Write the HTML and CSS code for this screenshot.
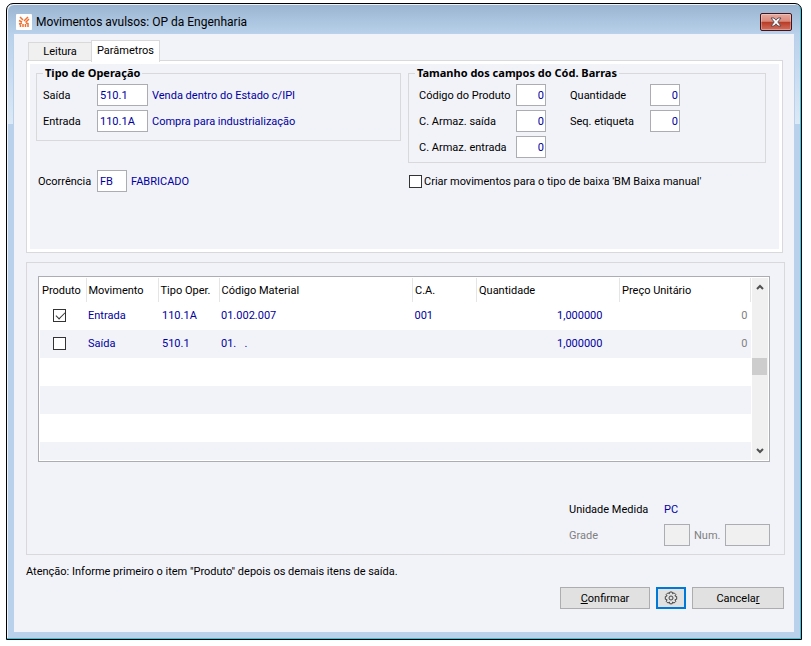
FILE: index.html
```html
<!DOCTYPE html>
<html lang="pt-BR">
<head>
  <meta charset="UTF-8" />
  <title>Movimentos avulsos: OP da Engenharia</title>
  <link rel="stylesheet" href="styles.css">
</head>
<body>

  <div class="window">
    <!-- Title bar -->
    <header class="titlebar">
      <svg class="logo" viewBox="0 0 16 16" width="16" height="16">
        <rect width="16" height="16" rx="1" fill="#fff" />
        <g stroke="#f07030" stroke-width="1.5" fill="none">
          <path d="M4 3l3 3M12 3L8 7M3 6.5l3 1.5M13 5L9.5 8.5" />
          <path d="M4.5 13v-2.5M7 13v-3M9.5 13v-3M12 13V9.5L10 9M3 10l3-1" />
        </g>
      </svg>
      <h1>Movimentos avulsos: OP da Engenharia</h1>
      <button class="close" type="button" aria-label="Fechar">
        <svg viewBox="0 0 12 10" width="12" height="10">
          <path d="M1 1h3l2 2.2L8 1h3L7.8 5 11 9H8L6 6.8 4 9H1l3.2-4z" fill="#fff" stroke="#5a5058" />
        </svg>
      </button>
    </header>

    <form class="content">
      <nav class="tabs">
        <button type="button" class="tab">Leitura</button>
        <button type="button" class="tab active">Parâmetros</button>
      </nav>

      <!-- Parâmetros -->
      <section class="params">
        <fieldset>
          <legend>Tipo de Operação</legend>
          <div class="operacao">
            <label for="saida">Saída</label>
            <input type="text" id="saida" value="510.1">
            <span class="value">Venda dentro do Estado c/IPI</span>
            <label for="entrada">Entrada</label>
            <input type="text" id="entrada" value="110.1A">
            <span class="value">Compra para industrialização</span>
          </div>
        </fieldset>

        <fieldset>
          <legend>Tamanho dos campos do Cód. Barras</legend>
          <div class="barras">
            <label for="codProduto">Código do Produto</label>
            <input type="text" id="codProduto" class="num" value="0">
            <label for="qtd">Quantidade</label>
            <input type="text" id="qtd" class="num" value="0">
            <label for="armSaida">C. Armaz. saída</label>
            <input type="text" id="armSaida" class="num" value="0">
            <label for="seqEtiqueta">Seq. etiqueta</label>
            <input type="text" id="seqEtiqueta" class="num" value="0">
            <label for="armEntrada">C. Armaz. entrada</label>
            <input type="text" id="armEntrada" class="num" value="0">
          </div>
        </fieldset>

        <div class="ocorrencia">
          <label for="ocorrencia">Ocorrência</label>
          <input type="text" id="ocorrencia" value="FB">
          <span class="value">FABRICADO</span>
        </div>

        <label class="criar">
          <input type="checkbox">Criar movimentos para o tipo de baixa 'BM Baixa manual'
        </label>
      </section>

      <!-- Movimentos -->
      <section class="movimentos">
        <div class="grid">
          <table>
            <colgroup>
              <col class="c-produto">
              <col class="c-movimento">
              <col class="c-tipo">
              <col>
              <col class="c-ca">
              <col class="c-quantidade">
              <col class="c-preco">
            </colgroup>
            <thead>
              <tr>
                <th>Produto</th>
                <th>Movimento</th>
                <th>Tipo Oper.</th>
                <th>Código Material</th>
                <th>C.A.</th>
                <th>Quantidade</th>
                <th>Preço Unitário</th>
              </tr>
            </thead>
            <tbody>
              <tr>
                <td class="check"><input type="checkbox" aria-label="Produto Entrada" checked></td>
                <td>Entrada</td>
                <td class="tipo">110.1A</td>
                <td>01.002.007</td>
                <td>001</td>
                <td class="quantidade">1,000000</td>
                <td class="preco">0</td>
              </tr>
              <tr>
                <td class="check"><input type="checkbox" aria-label="Produto Saída"></td>
                <td>Saída</td>
                <td class="tipo">510.1</td>
                <td class="codigo">01.   .</td>
                <td></td>
                <td class="quantidade">1,000000</td>
                <td class="preco">0</td>
              </tr>
              <tr><td colspan="7"></td></tr>
              <tr><td colspan="7"></td></tr>
              <tr><td colspan="7"></td></tr>
              <tr class="last"><td colspan="7"></td></tr>
            </tbody>
          </table>
          <div class="scrollbar">
            <svg viewBox="0 0 8 6" width="8" height="6"><path d="M1 5l3-3 3 3" /></svg>
            <div class="thumb"></div>
            <svg viewBox="0 0 8 6" width="8" height="6"><path d="M1 1l3 3 3-3" /></svg>
          </div>
        </div>

        <div class="unidade">
          <span>Unidade Medida</span>
          <span class="value">PC</span>
          <label for="grade" class="off">Grade</label>
          <div class="grade">
            <input type="text" id="grade" disabled>
            <label for="num" class="off">Num.</label>
            <input type="text" id="num" disabled>
          </div>
        </div>
      </section>

      <p class="aviso">Atenção: Informe primeiro o item "Produto" depois os demais itens de saída.</p>

      <footer class="actions">
        <button type="submit" class="btn confirmar"><u>C</u>onfirmar</button>
        <button type="button" class="btn config" aria-label="Configurações">
          <svg viewBox="0 0 14 14" width="14" height="14">
            <path d="M5.8 1h2.4l.4 1.7 1.5-.9 1.7 1.7-.9 1.5 1.8.5v2.8l-1.8.5.9 1.5-1.7 1.8-1.5-1-.4 1.7H5.8l-.4-1.7-1.5 1-1.7-1.8.9-1.5-1.8-.5V5.5L3.1 5l-.9-1.5 1.7-1.7 1.5.9z" />
            <circle cx="7" cy="7" r="2" />
          </svg>
        </button>
        <button type="button" class="btn cancelar">Cancela<u>r</u></button>
      </footer>
    </form>
  </div>

</body>
</html>
```
FILE: styles.css
```css
* {
  box-sizing: border-box;
}
body {
  margin: 0;
  padding: 3px 9px 6px 6px;
  background: #fff;
  color: #000;
  font-family: Tahoma, Roboto, sans-serif;
  font-size: 11px;
  line-height: 15px;
}
input, button {
  font: inherit;
  margin: 0;
}

/* Window frame */
.window {
  min-height: calc(100vh - 9px);
  display: flex;
  flex-direction: column;
  border: 1px solid #000;
  border-radius: 7px 7px 0 0;
  padding: 0 7px 7px;
  background: linear-gradient(#99b4d1, #b9d1ea 30px, #dce9f6 120px, #b9d1ea 120px);
  box-shadow: inset -1px -1px 0 #2cc8e0, inset 1px 1px 0 #eef4fa;
}
.titlebar {
  height: 30px;
  display: flex;
  align-items: center;
  gap: 4px;
  padding: 6px 2px 0;
}
.titlebar h1 {
  flex: 1;
  margin: 0;
  font-size: 12px;
  font-weight: normal;
  line-height: 16px;
}
.close {
  width: 32px;
  height: 18px;
  padding: 0;
  display: flex;
  align-items: center;
  justify-content: center;
  border: 1px solid #43141c;
  border-radius: 2px;
  background: linear-gradient(#e8a99c, #d98a7c 46%, #b83a22 50%, #d37060);
  box-shadow: inset 0 0 0 1px rgba(255, 255, 255, 0.3);
}
.content {
  flex: 1;
  padding: 6px 9px 22px 12px;
  background: #f2f3f9;
  box-shadow: 0 0 0 1px #b9d1ea;
}

/* Tabs */
.tabs {
  display: flex;
  align-items: flex-end;
  height: 20px;
  padding-left: 2px;
}
.tab {
  width: 64px;
  height: 18px;
  padding: 0;
  border: 1px solid #d9d9d9;
  border-bottom: 0;
  background: #f0f0f0;
}
.tab.active {
  position: relative;
  width: 69px;
  height: 22px;
  margin: 0 0 -2px -1px;
  padding-bottom: 2px;
  background: #fff;
}

/* Parameters panel */
.params {
  display: grid;
  grid-template-columns: 365fr 358fr;
  gap: 7px;
  align-items: start;
  align-content: start;
  min-height: 193px;
  margin-right: 2px;
  padding: 5px 16px 4px 9px;
  border: 1px solid #d9d9d9;
  box-shadow: inset 0 0 0 3px #fff;
}
fieldset {
  min-width: 0;
  margin: 0;
  padding: 4px 6px 8px;
  border: 1px solid #d9d9d9;
}
fieldset + fieldset {
  padding: 4px 10px;
}
legend {
  padding: 0 2px;
  font-family: Tahoma, "Noto Sans", sans-serif;
  font-weight: bold;
  line-height: 14px;
}
fieldset + fieldset legend {
  margin-left: -4px;
}
.operacao, .barras {
  display: grid;
  gap: 4px;
  align-items: center;
  white-space: nowrap;
}
.operacao {
  grid-template-columns: 50px 51px 1fr;
}
.barras {
  grid-template-columns: 93px 30px 96px 30px;
}
.barras label:nth-of-type(even) {
  padding-left: 20px;
}
input[type="text"] {
  width: 100%;
  height: 22px;
  padding: 1px 2px 0;
  border: 1px solid #abadb3;
  background: #fff;
  color: #0000a0;
}
input.num {
  padding-right: 1px;
  text-align: right;
}
.value {
  color: #0000a0;
}
.ocorrencia {
  display: grid;
  grid-template-columns: 55px 30px 1fr;
  gap: 4px;
  align-items: center;
  padding-left: 2px;
}
.criar {
  display: flex;
  align-items: center;
  gap: 2px;
  height: 22px;
  padding-left: 1px;
  white-space: nowrap;
}

/* Square tick boxes */
input[type="checkbox"] {
  appearance: none;
  flex: none;
  width: 13px;
  height: 13px;
  border: 1px solid #333;
  background: #fff;
}
input[type="checkbox"]:checked::before {
  content: '';
  display: block;
  width: 8px;
  height: 4px;
  margin: 2px 0 0 2px;
  border: solid #333;
  border-width: 0 0 1px 1px;
  transform: rotate(-45deg);
}

/* Movements panel */
.movimentos {
  margin-top: 9px;
  padding: 13px 14px 8px 11px;
  border: 1px solid #d9d9d9;
}
.grid {
  display: flex;
  height: 186px;
  padding: 1px;
  border: 1px solid #abadb3;
  background: #fff;
}
table {
  flex: 1;
  width: 0;
  table-layout: fixed;
  border-collapse: collapse;
}
.c-produto { width: 46px; }
.c-movimento { width: 72px; }
.c-tipo { width: 61px; }
.c-ca { width: 64px; }
.c-quantidade { width: 143px; }
.c-preco { width: 131px; }
th {
  height: 24px;
  padding: 0 2px;
  border-right: 1px solid #e5e5e5;
  font-weight: normal;
  text-align: left;
  white-space: nowrap;
}
td {
  height: 28px;
  padding: 0 2px 2px;
  color: #0000a0;
  white-space: nowrap;
}
tbody tr:nth-child(even) {
  background: #f2f3f9;
}
tbody .last td {
  height: 18px;
}
.check input {
  display: block;
  margin: 0 11px;
}
.tipo {
  padding-left: 4px;
}
.codigo {
  white-space: pre;
}
.quantidade {
  padding-right: 17px;
  text-align: right;
}
.preco {
  padding-right: 3px;
  color: #808080;
  text-align: right;
}
.scrollbar {
  display: flex;
  flex-direction: column;
  align-items: center;
  justify-content: space-between;
  width: 16px;
  margin-left: 1px;
  padding: 6px 0;
  background: #f0f0f0;
}
.scrollbar path {
  fill: none;
  stroke: #505050;
  stroke-width: 2;
}
.thumb {
  align-self: flex-start;
  width: 15px;
  height: 17px;
  margin-bottom: 6px;
  background: #cdcdcd;
}
.unidade {
  display: grid;
  grid-template-columns: 95px 106px;
  grid-template-rows: 22px 22px;
  row-gap: 4px;
  align-items: center;
  justify-content: end;
  margin-top: 36px;
}
.grade {
  display: grid;
  grid-template-columns: 26px 27px 45px;
  gap: 4px;
  align-items: center;
}
.off {
  color: #808080;
}
input[type="text"]:disabled {
  background: #f0f0f0;
}
.aviso {
  margin: 9px 0 8px;
}

/* Buttons */
.actions {
  display: flex;
  justify-content: flex-end;
  gap: 6px;
  padding-right: 1px;
}
.btn {
  width: 90px;
  height: 22px;
  padding: 0;
  border: 1px solid #adadad;
  background: #e1e1e1;
  color: #000;
}
.btn.config {
  display: flex;
  align-items: center;
  justify-content: center;
  width: 30px;
  border: 2px solid #0078d7;
}
.btn.config svg {
  fill: none;
  stroke: #444;
}
.btn.cancelar {
  width: 92px;
}
```
